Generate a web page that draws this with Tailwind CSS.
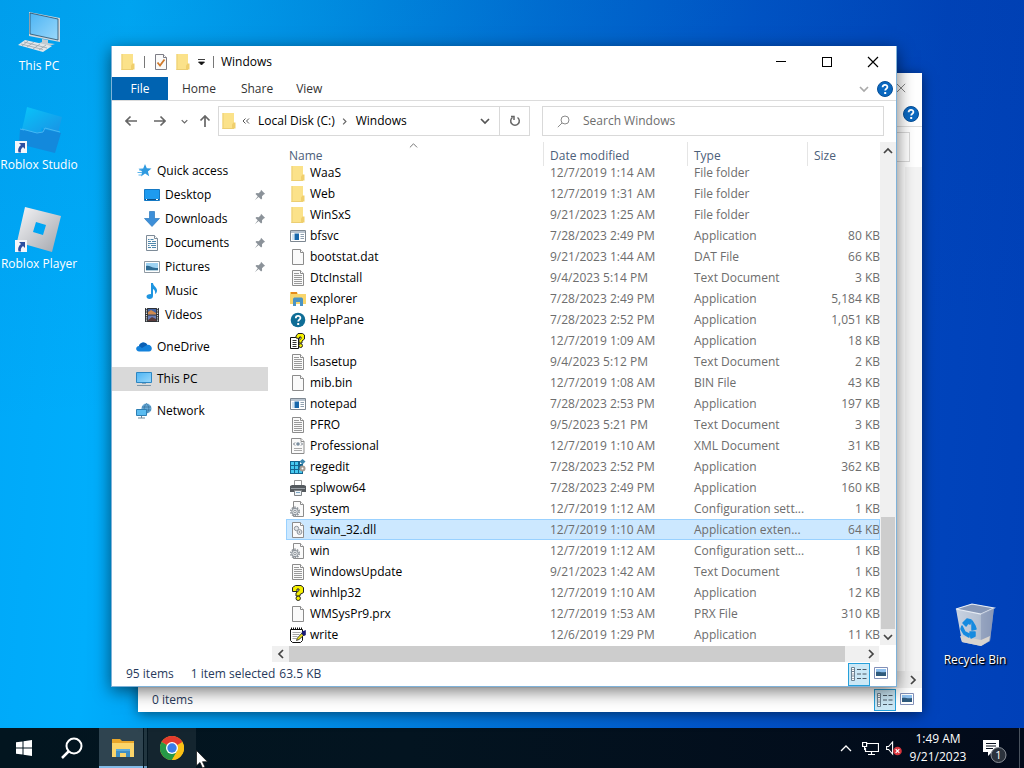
<!DOCTYPE html>
<html lang="en">
<head>
  <meta charset="UTF-8" />
  <meta name="viewport" content="width=device-width, initial-scale=1.0" />
  <title>Desktop - File Explorer</title>
  <script src="https://cdn.jsdelivr.net/npm/@tailwindcss/browser@4"></script>
</head>
<body class="h-screen min-h-[480px] flex flex-col overflow-hidden text-xs cursor-default font-['Open_Sans','Noto_Sans',sans-serif] bg-[linear-gradient(175deg,rgba(0,40,90,0.08),transparent_50%),linear-gradient(94deg,#00a8f8_0%,#00aefc_12%,#0094ea_30%,#0072d8_50%,#0056ca_70%,#0044bc_88%,#0040b8_100%)]">

  <!-- Icon sprite -->
  <svg class="absolute size-0" aria-hidden="true">
    <defs>
      <linearGradient id="g-screen" x1="0" y1="0" x2="1" y2="1"><stop offset="0" stop-color="#4cb4f4" /><stop offset="1" stop-color="#9ad8fb" /></linearGradient>
      <linearGradient id="g-studio" x1="0" y1="0" x2="1" y2="1"><stop offset="0" stop-color="#08c4fa" /><stop offset="1" stop-color="#1a92e4" /></linearGradient>
      <linearGradient id="g-player" x1="0" y1="0" x2="1" y2="1"><stop offset="0" stop-color="#f6f6f8" /><stop offset="1" stop-color="#a2a5ac" /></linearGradient>
      <linearGradient id="g-bin" x1="0" y1="0" x2="1" y2="0"><stop offset="0" stop-color="#c9d3e2" /><stop offset=".6" stop-color="#b4c0d2" /><stop offset="1" stop-color="#8494b4" /></linearGradient>
    </defs>
    <symbol id="i-folder" viewBox="0 0 16 16"><path d="M1.500 0h11.500v16H1.500z" fill="#fbe28a" /><path d="M2 0v16M1.500 15.500h11.500" stroke="#ecce72" fill="none" /><path d="M12.500 9.500h2V15.500h-3.500v-4z" fill="#f0cf6c" /></symbol>
    <symbol id="i-app" viewBox="0 0 16 16"><path d="M.5 2.500h15v11H.5z" fill="#fff" stroke="#7d8791" /><path d="M1 3h14v2H1z" fill="#b9c4cf" /><path d="M2 6h2v6H2z" fill="#cfe3f2" /><path d="M4.500 5.500H9v6.500H4.500z" fill="#1767ab" /><path d="M10.500 6.500h3.500M10.500 8.500h3.500M10.500 10.500h3.500" stroke="#8fa0b0" /></symbol>
    <symbol id="i-file" viewBox="0 0 16 16"><path d="M2.500.5h8l3 3v12h-11z" fill="#fafafa" stroke="#8c8c8c" /><path d="M10.500.5v3h3" fill="#fff" stroke="#8c8c8c" /></symbol>
    <symbol id="i-text" viewBox="0 0 16 16"><path d="M2.500.5h8l3 3v12h-11z" fill="#fafafa" stroke="#8c8c8c" /><path d="M10.500.5v3h3" fill="#fff" stroke="#8c8c8c" /><path d="M4 3.500h5M4 5.500h8M4 7.500h8M4 9.500h8M4 11.500h8M4 13.500h8" stroke="#9a9a9a" /></symbol>
    <symbol id="i-explorer" viewBox="0 0 16 16"><path d="M0 1h7l1 2h8v10H0z" fill="#f8d56c" /><path d="M1 1h6v2H1z" fill="#e58c1c" /><path d="M3 8.500C3 7 4 6.500 5 6.500h6c1 0 2 .5 2 2V15h-3v-4H6v4H3z" fill="#4a93c4" /></symbol>
    <symbol id="i-help" viewBox="0 0 16 16"><circle cx="8" cy="8" r="7.300" fill="#0f6d96" /><path d="M5.800 6.200c0-3 4.600-3 4.600-.3C10.400 7.600 8.200 7.600 8.200 9.600" fill="none" stroke="#fff" stroke-width="1.800" /><path d="M7.200 11h2v2h-2z" fill="#fff" /></symbol>
    <symbol id="i-question" viewBox="0 0 16 16"><path d="M2.500 6.500V2.500l3-2h5.500l2.500 2v5L10 9.500v1.500H6V8l3-2.500V4H7v2.500z" fill="#f6f000" stroke="#222" stroke-linejoin="round" /><circle cx="8.200" cy="13.300" r="2.200" fill="#f6f000" stroke="#222" /></symbol>
    <symbol id="i-hh" viewBox="0 0 16 16"><path d="M.5 4.500h8v11h-8z" fill="#fff" stroke="#111" /><path d="M2.500 7.500h4M2.500 9.500h4M2.500 11.500h4M2.500 13.500h4" stroke="#333" /><path d="M6 5V3l2-2.500h4.500l2 1.500v4L12 8v2H9V7.500L11 5.500V4H9.500v1.500z" fill="#f6f000" stroke="#222" /><circle cx="10.600" cy="12.600" r="1.900" fill="#f6f000" stroke="#222" /></symbol>
    <symbol id="i-xml" viewBox="0 0 16 16"><path d="M1.500.5h9.500l3 3v12H1.500z" fill="#fafafa" stroke="#8c8c8c" /><path d="M11 .5v3h3" fill="#fff" stroke="#8c8c8c" /><path d="M5 4.500 3.500 6 5 7.500M11 4.500 12.500 6 11 7.500" fill="none" stroke="#6b7480" /><circle cx="8" cy="6" r="1.800" fill="#7b8fa0" /><path d="M4 10.500h8M4 12.500h8" stroke="#aaa" /></symbol>
    <symbol id="i-regedit" viewBox="0 0 16 16"><path d="M0 2h10v3h3v10H0z" fill="#14658f" /><path d="M1 3h3v3H1zM5 3h3v3H5zM1 7h3v3H1zM5 7h3v3H5zM1 11h3v3H1zM5 11h3v3H5zM9 11h3v3H9z" fill="#45c8ef" /><path d="m12.500 0 3 2.500-3 3-3-3z" fill="#3a86ae" /><circle cx="12.500" cy="9.500" r="3" fill="#a79b91" /><circle cx="12.500" cy="9.500" r="1" fill="#fff" /></symbol>
    <symbol id="i-printer" viewBox="0 0 16 16"><path d="M4.500.5h7V6h-7z" fill="#fff" stroke="#999" /><path d="M0 6l2-1h12l2 1v6H0z" fill="#555a5f" /><path d="M1 8h14v1H1z" fill="#999fa5" /><path d="M4.500 10.500h7v5h-7z" fill="#eef3f7" stroke="#808488" /><path d="M6 12.500h4" stroke="#7fa7c4" /></symbol>
    <symbol id="i-config" viewBox="0 0 16 16"><path d="M3.500.5h7l3 3v12h-10z" fill="#fafafa" stroke="#8c8c8c" /><path d="M10.500.5v3h3" fill="#fff" stroke="#8c8c8c" /><circle cx="5" cy="10.500" r="4.200" fill="none" stroke="#8e959c" stroke-width="1.600" stroke-dasharray="1.600 1.040" /><circle cx="5" cy="10.500" r="3.200" fill="#dfe2e5" stroke="#8e959c" /><circle cx="5" cy="10.500" r="1.200" fill="#fff" stroke="#8e959c" /></symbol>
    <symbol id="i-dll" viewBox="0 0 16 16"><path d="M2.500.5h8l3 3v12h-11z" fill="#fafafa" stroke="#8c8c8c" /><path d="M10.500.5v3h3" fill="#fff" stroke="#8c8c8c" /><circle cx="6.500" cy="6.500" r="2.200" fill="#e3e6e9" stroke="#8e959c" /><circle cx="9.500" cy="10" r="2.400" fill="#e3e6e9" stroke="#8e959c" /><circle cx="9.500" cy="10" r=".7" fill="#777" /></symbol>
    <symbol id="i-write" viewBox="0 0 16 16"><path d="M.5 2.500h12v11l-2 2H2.500l-2-2z" fill="#fff" stroke="#111" /><path d="M1 1.500h12" stroke="#111" stroke-width="2" stroke-dasharray="1 1" /><path d="M2.500 5.500h8M2.500 7.500h7M2.500 9.500h5M2.500 11.500h4" stroke="#a5a5a5" /><path d="m12 6 2 2-5 4.500-2.500 1 .8-2.300z" fill="#eee21a" stroke="#222" stroke-width=".8" /><path d="M12 4.500 15.800 3v5l-1.800 1-2.500-2z" fill="#1a1b74" /></symbol>

    <symbol id="i-star" viewBox="0 0 16 16"><path d="m9 1 1.800 4.300 4.700.2-3.600 3 1.300 4.700-4.100-2.600L5 13.400l1.200-4.600-3.700-3 4.700-.3z" fill="#2f9ae0" /><path d="M1.500 9.500H6M2.500 12H6M3 7h3" stroke="#5ab4ec" /></symbol>
    <symbol id="i-desktop" viewBox="0 0 16 16"><path d="M.5 2.500h15v11H.5z" fill="#1e9bf0" stroke="#1579c4" /><path d="M1 12.500h14" stroke="#0d4f86" /><path d="M2 12.500h1M12 12.500h2" stroke="#fff" /></symbol>
    <symbol id="i-download" viewBox="0 0 16 16"><path d="M5.500.5h5v7h5L8 15.500.5 7.500h5z" fill="#3d8fd8" stroke="#2a78be" stroke-width=".7" /></symbol>
    <symbol id="i-documents" viewBox="0 0 16 16"><path d="M2.500.5h8l3 3v12h-11z" fill="#fafafa" stroke="#7d8b98" /><path d="M10.500.5v3h3" fill="#fff" stroke="#7d8b98" /><path d="M4 4.500h1.500M6.500 4.500h3M4 6.500h3M8 6.500h4M4 8.500h8M4 10.500h1.500M7 10.500h5M4 12.500h3M8 12.500h4" stroke="#4e87ac" /></symbol>
    <symbol id="i-pictures" viewBox="0 0 16 16"><path d="M.5 2.500h15v11H.5z" fill="#fff" stroke="#8f9aa3" /><path d="M2 4h12v8H2z" fill="#9ed3f3" /><path d="M2 7c3-1 5 1 7 1.500s4 .5 5 .5v3H2z" fill="#2f6c94" /><path d="M2 11h12v1H2z" fill="#b9d3e0" /></symbol>
    <symbol id="i-music" viewBox="0 0 16 16"><path d="M7 0h2c0 3 4.500 4.500 4 8-.2 1.600-1 2.500-2 3 .6-2.500-.3-4-2-5v7c0 1.700-1.500 3-3.500 3S2.500 15 2.500 13.500 4 11 7 11z" fill="#1f95e0" /></symbol>
    <symbol id="i-videos" viewBox="0 0 16 16"><path d="M1 1h14v14H1z" fill="#2d2f33" /><path d="M2.500 1v14M13.500 1v14" stroke="#d8dde2" stroke-width="1.200" stroke-dasharray="1.300 1" /><path d="M4 2h8v5.500H4z" fill="#4263a3" /><path d="M4 5 7 3l5 3v1.500H4z" fill="#d08a4e" /><path d="M4 8.500h8V14H4z" fill="#6a7fb8" /><path d="m4 13 4-3 4 2v2H4z" fill="#5a3b3b" /></symbol>
    <symbol id="i-cloud" viewBox="0 0 16 16"><path d="M3.200 12.500C-.8 12-.8 7.500 3 7c.8-4 6.200-5 8.200-1.200 5.200-.6 6.200 6 1.800 6.700z" fill="#1382dc" /><path d="M3 7c.8-4 6.200-5 8.200-1.200L6 9z" fill="#0a5fb4" /></symbol>
    <symbol id="i-pc" viewBox="0 0 16 16"><path d="M.5 1.500h15v10H.5z" fill="url(#g-screen)" stroke="#2d86c2" /><path d="M6 12h4v1H6z" fill="#8fa7b8" /><path d="M1 14.500h14" stroke="#7d95a6" /></symbol>
    <symbol id="i-network" viewBox="0 0 16 16"><circle cx="10.500" cy="5.500" r="5" fill="#69a9d6" /><path d="M6 4h9M6 7h9M10.500.5c-3 3-3 7 0 10M10.500.5c3 3 3 7 0 10" fill="none" stroke="#39759f" stroke-width=".8" /><path d="M.5 6.500h10v6H.5z" fill="#5bbcf0" stroke="#2d7fb4" /><path d="M2 15h7M5.500 13v2" stroke="#6f8798" /></symbol>
    <symbol id="i-pin" viewBox="0 0 12 12"><path d="m7 .8 4.200 4.200-1.200.3-2 2 .1 2.200-1 .9-2.500-2.500L.8 11.200l3-4L1.500 5l1-1 2.200.2 2-2z" fill="#8b9299" /></symbol>

    <symbol id="i-helpblue" viewBox="0 0 16 16"><circle cx="8" cy="8" r="7.500" fill="#0a68c0" stroke="#084f96" /><path d="M5.600 6.300c0-3.300 4.800-3.200 4.800-.3 0 1.800-2.200 1.700-2.200 3.600" fill="none" stroke="#fff" stroke-width="1.800" /><path d="M7.200 11h2v2h-2z" fill="#fff" /></symbol>
    <symbol id="i-close" viewBox="0 0 12 12"><path d="m1 1 10 10M11 1 1 11" stroke="currentColor" stroke-width="1.200" /></symbol>
    <symbol id="i-down" viewBox="0 0 10 10"><path d="m1 3 4 4 4-4" fill="none" stroke="currentColor" stroke-width="1.700" /></symbol>
    <symbol id="i-up" viewBox="0 0 10 10"><path d="m1 7 4-4 4 4" fill="none" stroke="currentColor" stroke-width="1.700" /></symbol>
    <symbol id="i-left" viewBox="0 0 10 10"><path d="M7 1 3 5l4 4" fill="none" stroke="currentColor" stroke-width="1.700" /></symbol>
    <symbol id="i-right" viewBox="0 0 10 10"><path d="m3 1 4 4-4 4" fill="none" stroke="currentColor" stroke-width="1.700" /></symbol>
    <symbol id="i-arrow" viewBox="0 0 12 12"><path d="M12 6H1M5.500 1.500 1 6l4.500 4.500" fill="none" stroke="currentColor" stroke-width="1.700" /></symbol>
    <symbol id="i-details" viewBox="0 0 18 14"><path d="M1.500.5h3v13h-3z" fill="#fff" stroke="#6d8292" /><path d="M1.500 4.500h3M1.500 9h3" stroke="#6d8292" /><path d="M2.500 2.500h1M2.500 7h1M2.500 11.500h1M7 2.500h4M12.500 2.500h4M7 7h4M12.500 7h4M7 11.500h4M12.500 11.500h4" stroke="#4c5b67" /></symbol>
    <symbol id="i-thumbs" viewBox="0 0 14 12"><path d="M.5.5h13v11H.5z" fill="#fff" stroke="#8290b8" /><path d="M2 2h10v6H2z" fill="#8fc0ee" /><path d="M2 5c3-1 5 1 10 0v4H2z" fill="#2f5a7c" /></symbol>
    <symbol id="i-shortcut" viewBox="0 0 12 12"><path d="M0 0h12v12H0z" fill="#f4f6fa" /><path d="M4 2h6v6L8 6c-2 1.500-2.500 3-2 5.500H3.500C2.500 8.500 3.500 6 6 4z" fill="#2d4fa0" /></symbol>
  </svg>

  <!-- Desktop -->
  <main class="relative flex-1 min-h-0">
    <div class="w-[78px] flex flex-col text-white text-center whitespace-nowrap [text-shadow:1px_1px_2px_#000,1px_1px_1px_#000]">
      <button class="h-[99px] pt-2 flex flex-col items-center">
        <svg class="size-12" viewBox="0 0 48 48"><path d="m14 4 31 6v24L14 28z" fill="#cfd8de" /><path d="m15 5 28 6v21L15 26z" fill="url(#g-screen)" stroke="#2a4c66" stroke-width=".8" /><path d="m27 31 6 1v3l7 1-6 2-12-2 5-2z" fill="#c4ccd2" /><path d="m10 32 27 6-9 6L3 37z" fill="#e2e6e9" /><path d="m9 34 23 6M6 36l22 5.500M13 33l-6 5M19 34l-7 5M25 36l-7 5M31 37l-7 5" stroke="#98a4ad" stroke-width=".8" /></svg>
        <span class="leading-5">This PC</span>
      </button>
      <button class="h-[99px] pt-2 flex flex-col items-center">
        <svg class="size-12" viewBox="0 0 48 48"><path d="m12 0 35 10-4 16-15-4-1-2-2 6-18-4 2-8z" fill="url(#g-studio)" /><path d="m5 22 16 4 6-1 1-3 18 4-6 20L4 37z" fill="#1389dc" /><path d="M7 22 22 26l6-1 2-4 15 4M5 22l4 1" fill="none" stroke="#46b8f4" /><use href="#i-shortcut" x="0" y="34" width="12" height="12" /></svg>
        <span class="leading-5">Roblox Studio</span>
      </button>
      <button class="h-[99px] pt-2 flex flex-col items-center">
        <svg class="size-12" viewBox="0 0 48 48"><path fill-rule="evenodd" d="m10 1 36 9-9 36-35-10zm11 15-3 10 10 3 3-10z" fill="url(#g-player)" /><use href="#i-shortcut" x="0" y="34" width="12" height="12" /></svg>
        <span class="leading-5">Roblox Player</span>
      </button>
    </div>

    <button class="absolute right-2 bottom-[58px] w-[82px] flex flex-col items-center text-white whitespace-nowrap [text-shadow:1px_1px_2px_#000,1px_1px_1px_#000]">
      <svg class="size-12" viewBox="0 0 48 48"><path d="m5 7 16-5 22 4-4 33-9 5-19-4z" fill="url(#g-bin)" /><path d="m5 7 16-5 22 4-13 6z" fill="#8898b6" stroke="#e6ecf4" stroke-width="1.200" /><path d="m30 12 13-6-4 33-9 5z" fill="#8a9ab8" opacity=".65" /><path d="m9 34 21 4 9-4-1 5-8 5-19-4z" fill="#d8d4cf" /><path d="m12 21 4-4 4 1-1 4-2-1-2 3zM21 19l3 5 1 3-4 1zM11 24l3 6 4 2v3l-5-3-3-5zM19 30l5 0 0 4-4 2z" fill="#168be0" stroke="#168be0" stroke-width="1.500" stroke-linejoin="round" /></svg>
      <span class="leading-5">Recycle Bin</span>
    </button>

    <!-- Window behind -->
    <section aria-label="File Explorer" class="absolute left-[138px] right-[102px] top-[73px] bottom-4 flex flex-col bg-white shadow-[0_2px_12px_rgba(0,0,0,0.5)]">
      <div class="h-[30px] shrink-0 flex items-center justify-end pr-4 text-[#888]">
        <button aria-label="Close"><svg class="size-[10px]"><use href="#i-close" /></svg></button>
      </div>
      <div class="h-6 shrink-0 flex items-center justify-end pr-[3px] pb-[2px] border-b border-[#ddd]">
        <button aria-label="Help"><svg class="size-4"><use href="#i-helpblue" /></svg></button>
      </div>
      <div class="h-10 shrink-0 flex items-center justify-end pr-3">
        <div class="w-80 h-[30px] border border-[#d9d9d9]"></div>
      </div>
      <div class="flex-1 flex justify-end"><div class="w-[17px] bg-[#f4f4f4]"></div></div>
      <div class="h-[17px] shrink-0 flex items-center justify-end pr-1 bg-[#f0f0f0] text-[#444]">
        <button aria-label="Scroll right"><svg class="size-[10px]"><use href="#i-right" /></svg></button>
      </div>
      <div class="h-6 shrink-0 flex items-center pl-[14px] pr-2 text-[#283a5c]">
        <span class="flex-1">0 items</span>
        <button aria-label="Details" class="w-[22px] h-[22px] grid place-items-center border border-[#26a0da] bg-[#cbe8f6]"><svg class="w-[18px] h-[14px]"><use href="#i-details" /></svg></button>
        <button aria-label="Large icons" class="ml-1 mb-[2px]"><svg class="w-[14px] h-3"><use href="#i-thumbs" /></svg></button>
      </div>
    </section>

    <!-- Windows folder -->
    <section aria-label="Windows" class="absolute left-[111px] right-[127px] top-[46px] bottom-[41px] flex flex-col bg-white border-x border-b border-[#2a7fc0]/60 shadow-[0_4px_16px_rgba(0,0,0,0.55)]">
      <header class="h-[31px] shrink-0 flex items-center">
        <svg class="ml-2 size-4"><use href="#i-folder" /></svg>
        <span class="ml-2 w-px h-3 bg-[#777]"></span>
        <button aria-label="Properties" class="ml-2"><svg class="size-4" viewBox="0 0 16 16"><path d="M2.500.5h8l3 3v12h-11z" fill="#fafafa" stroke="#7d7d86" /><path d="M10.500.5v3h3" fill="#fff" stroke="#7d7d86" /><path d="m4.500 8.500 2.500 3 4.500-6" fill="none" stroke="#d07a2c" stroke-width="1.800" /></svg></button>
        <button aria-label="New folder" class="ml-[6px]"><svg class="size-4"><use href="#i-folder" /></svg></button>
        <button aria-label="Customize toolbar" class="ml-[6px]"><svg class="w-[9px] h-2" viewBox="0 0 9 8"><path d="M1 1.500h7M1.500 4h6l-3 3z" fill="#111" stroke="#111" stroke-width=".8" /></svg></button>
        <span class="ml-[7px] w-px h-3 bg-[#777]"></span>
        <h1 class="ml-[7px] flex-1">Windows</h1>
        <button aria-label="Minimize" class="w-[46px] h-full grid place-items-center"><span class="w-[10px] h-px bg-black"></span></button>
        <button aria-label="Maximize" class="w-[46px] h-full grid place-items-center"><span class="size-[10px] border border-black"></span></button>
        <button aria-label="Close" class="w-[46px] h-full grid place-items-center"><svg class="size-3"><use href="#i-close" /></svg></button>
      </header>

      <div class="h-6 shrink-0 flex items-center border-b border-[#dcdcdc] text-[#333]">
        <button class="w-14 h-full bg-[#0063b1] text-white">File</button>
        <button class="h-full pl-[14px] pr-[11px]">Home</button>
        <button class="h-full pl-[14px] pr-[11px]">Share</button>
        <button class="h-full pl-[12px] pr-[11px]">View</button>
        <button aria-label="Expand ribbon" class="ml-auto text-[#aaa]"><svg class="size-[10px]"><use href="#i-down" /></svg></button>
        <button aria-label="Help" class="ml-2 mr-[3px]"><svg class="size-4"><use href="#i-helpblue" /></svg></button>
      </div>

      <div class="h-10 mb-px shrink-0 flex items-center pl-2 pr-3 text-[#666]">
        <button aria-label="Back" class="w-[22px] grid place-items-center"><svg class="size-3"><use href="#i-arrow" /></svg></button>
        <button aria-label="Forward" class="ml-[7px] w-[22px] grid place-items-center"><svg class="size-3 rotate-180"><use href="#i-arrow" /></svg></button>
        <button aria-label="Recent locations" class="ml-[7px] w-3 grid place-items-center"><svg class="size-[7px]"><use href="#i-down" /></svg></button>
        <button aria-label="Up" class="ml-[7px] w-4 grid place-items-center"><svg class="size-3 rotate-90"><use href="#i-arrow" /></svg></button>
        <div class="ml-[5px] flex-1 h-[30px] flex items-center border border-[#d9d9d9] text-black">
          <svg class="ml-[2px] size-4"><use href="#i-folder" /></svg>
          <svg class="ml-[5px] w-2 h-[6px]" viewBox="0 0 8 6"><path d="M3.500.5 1 3l2.500 2.500M7 .5 4.500 3 7 5.500" fill="none" stroke="#555" /></svg>
          <button class="ml-2">Local Disk (C:)</button>
          <svg class="ml-[6px] size-[7px] text-[#666]"><use href="#i-right" /></svg>
          <button class="ml-2">Windows</button>
          <button aria-label="Previous locations" class="ml-auto mr-[9px] text-[#555]"><svg class="size-[10px]"><use href="#i-down" /></svg></button>
          <button aria-label="Refresh" class="w-[30px] h-full grid place-items-center border-l border-[#d9d9d9] text-[#666]"><svg class="size-3" viewBox="0 0 12 12"><path d="M3.500 2.500a4.300 4.300 0 1 0 5 0M2 1.500h3V5" fill="none" stroke="currentColor" stroke-width="1.500" /></svg></button>
        </div>
        <label class="ml-3 w-[342px] h-[30px] flex items-center border border-[#d9d9d9]">
          <svg class="ml-[14px] size-[13px]" viewBox="0 0 13 13"><circle cx="8" cy="5" r="4" fill="none" stroke="#8a8a8a" /><path d="M5 8 .8 12.200" stroke="#8a8a8a" /></svg>
          <input type="text" aria-label="Search Windows" placeholder="Search Windows" class="ml-[13px] flex-1 min-w-0 outline-none placeholder:text-[#6d6d6d]" />
        </label>
      </div>

      <div class="flex-1 min-h-0 flex">
        <nav id="places" aria-label="Places" class="w-40 shrink-0 pt-[17px] pr-1 overflow-hidden"></nav>

        <div class="flex-1 min-w-0 flex flex-col">
          <div class="flex-1 min-h-0 flex">
            <!-- reversed column: the list opens scrolled to its end -->
            <div class="flex-1 min-w-0 pl-[14px] flex flex-col-reverse overflow-auto [scrollbar-width:none]">
              <table class="w-full table-fixed border-separate border-spacing-0">
                <thead class="sticky top-0 z-10 bg-white text-[#4c607a] text-left">
                  <tr class="h-6">
                    <th class="relative p-0 pl-[3px] pt-1 font-normal leading-5">Name<svg class="absolute left-[123px] top-0 size-[9px] text-[#666]" viewBox="0 0 10 10"><path d="m1 6 4-4 4 4" fill="none" stroke="currentColor" /></svg></th>
                    <th class="w-36 p-0 pl-[6px] pt-1 font-normal leading-5 border-l border-[#e5e5e5]">Date modified</th>
                    <th class="w-[120px] p-0 pl-[6px] pt-1 font-normal leading-5 border-l border-[#e5e5e5]">Type</th>
                    <th class="w-[73px] p-0 pl-[6px] pt-1 font-normal leading-5 border-l border-[#e5e5e5]">Size</th>
                  </tr>
                </thead>
                <tbody id="files" class="text-[#6d6d6d] whitespace-nowrap"></tbody>
              </table>
            </div>
            <!-- vertical scrollbar -->
            <div class="w-4 flex flex-col items-center bg-[#f0f0f0] text-[#444]">
              <button aria-label="Scroll up" class="h-[18px]"><svg class="size-[10px]"><use href="#i-up" /></svg></button>
              <div class="mt-auto w-[14px] h-[112px] bg-[#cdcdcd]"></div>
              <button aria-label="Scroll down" class="h-4"><svg class="size-[10px]"><use href="#i-down" /></svg></button>
            </div>
          </div>
          <!-- horizontal scrollbar -->
          <div class="h-[17px] shrink-0 mr-[17px] flex items-stretch bg-[#f0f0f0] text-[#444] border-t border-white">
            <button aria-label="Scroll left" class="w-[17px] grid place-items-center"><svg class="size-[10px]"><use href="#i-left" /></svg></button>
            <div class="flex-1 bg-[#cdcdcd]"></div>
            <button aria-label="Scroll right" class="ml-[17px] w-[17px] grid place-items-center"><svg class="size-[10px]"><use href="#i-right" /></svg></button>
          </div>
        </div>
      </div>

      <footer class="h-6 shrink-0 flex items-center pl-[14px] pr-2 text-[#283a5c]">
        <span>95 items</span>
        <span class="ml-[17px]">1 item selected</span>
        <span class="ml-1">63.5 KB</span>
        <button aria-label="Details" class="ml-auto w-[22px] h-[23px] grid place-items-center border border-[#26a0da] bg-[#cbe8f6]"><svg class="w-[18px] h-[14px]"><use href="#i-details" /></svg></button>
        <button aria-label="Large icons" class="ml-1 mb-[2px]"><svg class="w-[14px] h-3"><use href="#i-thumbs" /></svg></button>
      </footer>
    </section>
  </main>

  <!-- Taskbar -->
  <footer class="h-10 shrink-0 flex items-stretch bg-[linear-gradient(90deg,#02151f,#031420_40%,#020a1a)] text-white">
    <button aria-label="Start" class="w-12 grid place-items-center"><svg class="size-4" viewBox="0 0 16 16"><path d="M0 2.300 6.500 1.400v6.100H0zM7.500 1.200 16 0v7.500H7.500zM0 8.500h6.500v6.100L0 13.700zM7.500 8.500H16V16l-8.500-1.200z" fill="#fff" /></svg></button>
    <button aria-label="Search" class="w-12 grid place-items-center"><svg class="w-6 h-[22px]" viewBox="0 0 24 22"><circle cx="14" cy="9" r="7.500" fill="none" stroke="#fff" stroke-width="2" /><path d="m8.500 14.500-6.500 6.500" stroke="#fff" stroke-width="2.500" /></svg></button>
    <button aria-label="File Explorer" class="ml-[3px] w-11 pl-[3px] pt-[3px] grid place-items-center bg-[#2f4450] border-b-2 border-[#83bce8]">
      <svg class="w-[22px] h-[19px]" viewBox="0 0 22 19"><path d="M0 0h8l2 2h12v16H0z" fill="#e9a62a" /><path d="M0 4h22v14H0z" fill="#fbd56a" /><path d="M4 10h14v8h-4v-4H8v4H4z" fill="#3f8fc4" /><path d="M4 10h14v2H4z" fill="#5cabdc" /></svg>
    </button>
    <span class="ml-px w-[3px] bg-[#223640] border-b-2 border-[#6b9dc2]"></span>
    <button aria-label="Google Chrome" class="ml-px w-12 grid place-items-center bg-[#14252f]">
      <svg class="size-6" viewBox="0 0 24 24"><circle cx="12" cy="12" r="12" fill="#fbc116" /><path d="M12 12 1.600 6A12 12 0 0 1 22.400 6z" fill="#e33b2e" /><path d="M12 12 1.600 6A12 12 0 0 0 12 24l5.200-9z" fill="#279847" /><path d="M12 6h10.400L17.200 15 12 24a12 12 0 0 0 10.400-18z" fill="#fbc116" /><circle cx="12" cy="12" r="6" fill="#fff" /><circle cx="12" cy="12" r="4.700" fill="#3a7de8" /></svg>
    </button>
    <div class="ml-auto flex items-center">
      <button aria-label="Show hidden icons" class="w-6 grid place-items-center"><svg class="w-3 h-2" viewBox="0 0 12 8"><path d="m1 7 5-5 5 5" fill="none" stroke="#fff" stroke-width="1.300" /></svg></button>
      <button aria-label="Network" class="w-6 grid place-items-center"><svg class="w-[17px] h-[15px]" viewBox="0 0 17 15"><path d="M5 2.500h11.500v8H3.500V7M9.500 10.500v3M6 13.500h7" fill="none" stroke="#fff" stroke-width="1.200" /><path d="M.6 1.500h4v4h-4zM2.600 6v3" fill="none" stroke="#fff" stroke-width="1.200" /></svg></button>
      <button aria-label="Volume muted" class="w-6 grid place-items-center"><svg class="w-4 h-[15px]" viewBox="0 0 16 15"><path d="M.6 5.500h2l4-4.500v12l-4-4.500h-2z" fill="none" stroke="#fff" stroke-width="1.100" /><circle cx="11.500" cy="10" r="4.300" fill="#d8343c" /><path d="m9.700 8.200 3.600 3.600M13.300 8.200l-3.600 3.600" stroke="#fff" stroke-width="1.200" /></svg></button>
      <button class="w-16 text-center leading-[18px] whitespace-nowrap">1:49 AM<br />9/21/2023</button>
      <button aria-label="Notifications, 1 new" class="w-11 pl-[6px] pt-[6px] grid place-items-center"><svg class="w-[26px] h-[26px]" viewBox="0 0 26 26"><path d="M1 2h16v12H10l-4 4v-4H1z" fill="#fff" /><path d="M4 5.500h10M4 8h10M4 10.500h7" stroke="#0a1220" stroke-width="1.200" /><circle cx="16.500" cy="17" r="7.500" fill="#2c333d" stroke="#8b9098" /><text x="16.500" y="21" text-anchor="middle" font-size="11" fill="#fff">1</text></svg></button>
      <button aria-label="Show desktop" class="ml-[5px] w-[5px] h-10 border-l border-[#49525e]"></button>
    </div>
  </footer>

  <svg class="absolute left-[196px] top-[750px] w-3 h-[18px] pointer-events-none" viewBox="0 0 12 18" aria-hidden="true"><path d="M.5.5v15.300l3.500-3.300 2.500 5.500 2.500-1-2.500-5.300h5z" fill="#fff" stroke="#111" stroke-width=".7" /></svg>

  <script>
    const places = [
      { name: 'Quick access', icon: 'star' },
      { name: 'Desktop', icon: 'desktop', child: true, pinned: true },
      { name: 'Downloads', icon: 'download', child: true, pinned: true },
      { name: 'Documents', icon: 'documents', child: true, pinned: true },
      { name: 'Pictures', icon: 'pictures', child: true, pinned: true },
      { name: 'Music', icon: 'music', child: true },
      { name: 'Videos', icon: 'videos', child: true },
      { name: 'OneDrive', icon: 'cloud', gap: true },
      { name: 'This PC', icon: 'pc', gap: true, current: true },
      { name: 'Network', icon: 'network', gap: true }
    ];

    // icon, name, date modified, type, size
    const files = [
      ['folder', 'WaaS', '12/7/2019 1:14 AM', 'File folder', ''],
      ['folder', 'Web', '12/7/2019 1:31 AM', 'File folder', ''],
      ['folder', 'WinSxS', '9/21/2023 1:25 AM', 'File folder', ''],
      ['app', 'bfsvc', '7/28/2023 2:49 PM', 'Application', '80 KB'],
      ['file', 'bootstat.dat', '9/21/2023 1:44 AM', 'DAT File', '66 KB'],
      ['text', 'DtcInstall', '9/4/2023 5:14 PM', 'Text Document', '3 KB'],
      ['explorer', 'explorer', '7/28/2023 2:49 PM', 'Application', '5,184 KB'],
      ['help', 'HelpPane', '7/28/2023 2:52 PM', 'Application', '1,051 KB'],
      ['hh', 'hh', '12/7/2019 1:09 AM', 'Application', '18 KB'],
      ['text', 'lsasetup', '9/4/2023 5:12 PM', 'Text Document', '2 KB'],
      ['file', 'mib.bin', '12/7/2019 1:08 AM', 'BIN File', '43 KB'],
      ['app', 'notepad', '7/28/2023 2:53 PM', 'Application', '197 KB'],
      ['text', 'PFRO', '9/5/2023 5:21 PM', 'Text Document', '3 KB'],
      ['xml', 'Professional', '12/7/2019 1:10 AM', 'XML Document', '31 KB'],
      ['regedit', 'regedit', '7/28/2023 2:52 PM', 'Application', '362 KB'],
      ['printer', 'splwow64', '7/28/2023 2:49 PM', 'Application', '160 KB'],
      ['config', 'system', '12/7/2019 1:12 AM', 'Configuration sett...', '1 KB'],
      ['dll', 'twain_32.dll', '12/7/2019 1:10 AM', 'Application exten...', '64 KB'],
      ['config', 'win', '12/7/2019 1:12 AM', 'Configuration sett...', '1 KB'],
      ['text', 'WindowsUpdate', '9/21/2023 1:42 AM', 'Text Document', '1 KB'],
      ['question', 'winhlp32', '12/7/2019 1:10 AM', 'Application', '12 KB'],
      ['file', 'WMSysPr9.prx', '12/7/2019 1:53 AM', 'PRX File', '310 KB'],
      ['write', 'write', '12/6/2019 1:29 PM', 'Application', '11 KB']
    ];
    const selected = 'twain_32.dll';

    document.getElementById('places').innerHTML = places.map(p => `
      <a href="#" class="h-6 flex items-center pr-[2px] ${p.child ? 'pl-8' : 'pl-6'} ${p.gap ? 'mt-2' : ''} ${p.current ? 'bg-[#d9d9d9]' : ''}">
        <svg class="size-4 mr-[5px]"><use href="#i-${p.icon}" /></svg>
        <span class="flex-1">${p.name}</span>
        ${p.pinned ? '<svg class="size-3"><use href="#i-pin" /></svg>' : ''}
      </a>`).join('');

    document.getElementById('files').innerHTML = files.map(([icon, name, date, type, size]) => `
      <tr class="h-[21px] ${name === selected ? 'bg-[#cce8ff] outline outline-1 -outline-offset-1 outline-[#99d1ff]' : ''}">
        <td class="p-0 pl-1"><div class="flex items-center text-black leading-5"><svg class="size-4 mr-1"><use href="#i-${icon}" /></svg>${name}</div></td>
        <td class="p-0 pl-[7px] leading-5">${date}</td>
        <td class="p-0 pl-[7px] leading-5">${type}</td>
        <td class="p-0 text-right leading-5">${size}</td>
      </tr>`).join('');
  </script>
</body>
</html>
